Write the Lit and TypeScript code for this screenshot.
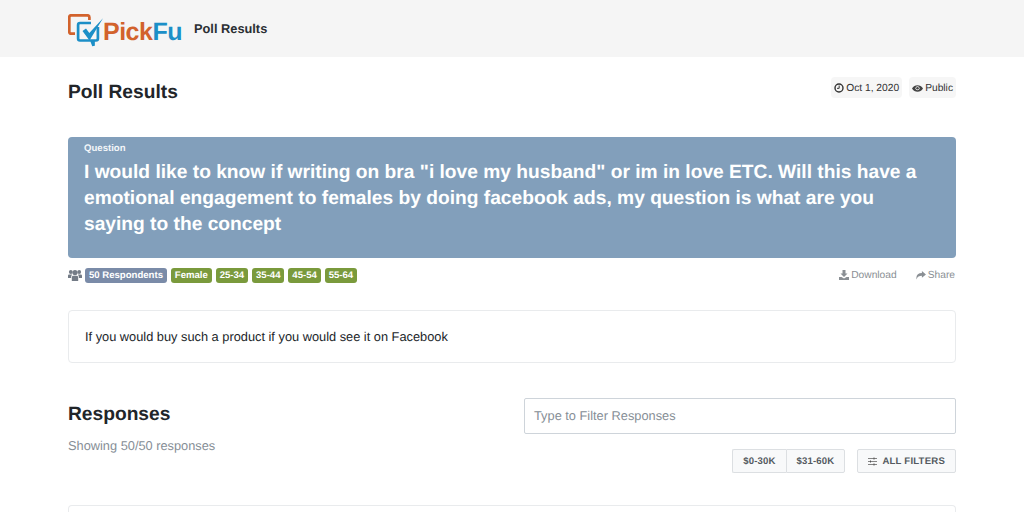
import { LitElement, html, css, svg } from "lit";
import { customElement } from "lit/decorators.js";

const clock = svg`<svg class="ic" width="10" height="10" viewBox="0 0 12 12"><circle cx="6" cy="6" r="4.800" fill="none" stroke="#333" stroke-width="1.700"/><path d="M6.200 3v3.400H3.600" fill="none" stroke="#333" stroke-width="1.200"/></svg>`;
const eye = svg`<svg class="ic" width="11" height="11" viewBox="0 0 12 12"><path d="M0 6c1.500-2.400 3.600-3.600 6-3.600s4.500 1.200 6 3.600c-1.500 2.400-3.600 3.600-6 3.600S1.500 8.400 0 6z" fill="#444"/><circle cx="6" cy="5.800" r="2.200" fill="#f6f6f6"/><circle cx="6" cy="5.800" r="1.400" fill="#444"/></svg>`;
const users = svg`<svg width="14" height="13" viewBox="0 0 14 13"><g fill="#737b86"><circle cx="2.800" cy="3" r="1.900"/><circle cx="11.200" cy="3" r="1.900"/><circle cx="7" cy="3.600" r="2.600"/><path d="M0 9V6.800c0-.8.600-1.300 1.400-1.300h2c.3 0 .5.100.7.300-.6.600-1 1.400-1 2.400V9H0zM14 9V6.800c0-.8-.6-1.300-1.400-1.300h-2c-.3 0-.5.100-.7.300.6.600 1 1.400 1 2.400V9H14z"/><path d="M3.800 8.400c0-1 .7-1.700 1.600-1.700h3.200c.9 0 1.600.7 1.600 1.700V12H3.800z"/></g></svg>`;
const download = svg`<svg class="ic" width="10" height="10" viewBox="0 0 10 10"><path d="M3.500 0h3v3.500h2L5 7 1.500 3.500h2zM0 7h2.500L5 8.500 7.500 7H10v3H0z" fill="#8a8f94"/></svg>`;
const share = svg`<svg class="ic" width="10" height="9" viewBox="0 0 11 10"><path d="M6.500 0L11 3.800 6.500 7.500V5.300C3.500 5.300 1.500 6 .6 9.500-.4 5 2 2.400 6.500 2.300z" fill="#8a8f94"/></svg>`;
const sliders = svg`<svg class="ic" width="9" height="9" viewBox="0 0 9 9"><path d="M0 1.500h9M0 4.500h9M0 7.500h9" stroke="#666" stroke-width=".8"/><path d="M5.500 .6h1v1.800h-1zM2 3.600h1v1.800H2zM5.500 6.600h1v1.800h-1z" fill="#555"/></svg>`;
const logoMark = svg`<svg class="mark" width="35" height="33" viewBox="0 0 35 33">
  <path d="M7 19.700H3.200C2 19.700 1.300 19 1.300 17.800V3.200C1.300 2 2 1.300 3.200 1.300H19.500c1.200 0 1.900.7 1.900 1.900V6" fill="none" stroke="#d2622c" stroke-width="2.700"/>
  <path d="M23 9H12c-1.200 0-1.900.7-1.900 1.900V24.600c0 1.200.7 1.900 1.900 1.900h11.500l2 5.300V26.500H28c1.200 0 1.900-.7 1.900-1.900V13" fill="none" stroke="#1c8fc7" stroke-width="2.700"/>
  <path d="M14.500 17l3.500-2.500 3.300 4.500L35 4.200 21.500 26.500z" fill="#1c8fc7"/>
</svg>`;

@customElement("app-root")
export class AppRoot extends LitElement {
  static styles = css`
    :host { display: block; font-family: "Liberation Sans", Arial, sans-serif; color: #212529; background: #fff; height: 512px; overflow: hidden; text-rendering: geometricPrecision; }
    .top { height: 57px; background: #f5f5f5; box-sizing: border-box; padding: 14px 68px 0; display: flex; align-items: flex-start; }
    .logo { display: flex; align-items: flex-start; width: 114px; height: 33px; flex: none; }
    .mark { flex: none; }
    .logotext { font-size: 25px; font-weight: 700; letter-spacing: -.5px; line-height: 30px; margin-top: 3px; color: #d2622c; }
    .logotext span { color: #1c8fc7; }
    .toptitle { font-size: 12.800px; font-weight: 700; margin-left: 12px; line-height: 16px; padding-top: 7px; color: #2b2f33; }
    .main { padding: 0 68px; }
    .head { display: flex; justify-content: space-between; align-items: flex-start; padding-top: 20px; }
    h1 { margin: 1px 0 0; font-size: 19.200px; font-weight: 700; line-height: 30px; }
    .metas { display: flex; gap: 7px; }
    .meta { background: #f6f6f6; border-radius: 4px; font-size: 10.240px; line-height: 21px; height: 21px; box-sizing: border-box; padding: 1px 3px 0; display: flex; align-items: center; gap: 2px; color: #333; }
    .q { margin-top: 29px; height: 121px; box-sizing: border-box; background: #829fbb; border-radius: 4px; padding: 6px 16px 0; color: #fff; }
    .qlabel { font-size: 9.600px; font-weight: 700; line-height: 11px; color: #f3f6f9; }
    .qtext { font-size: 19.200px; font-weight: 700; line-height: 26px; margin-top: 6px; }
    .tags { display: flex; justify-content: space-between; align-items: center; height: 33px; }
    .taglist { display: flex; align-items: center; gap: 4px; padding-top: 2px; }
    .tag { font-size: 9.600px; font-weight: 700; line-height: 15px; height: 15px; padding: 0 3.900px; border-radius: 3px; background: #7a9a3c; color: #fff; }
    .tag.blue { background: #7a8ba8; }
    .taglist svg { margin-right: -1px; }
    .acts { display: flex; gap: 19px; font-size: 10.240px; color: #8a8f94; padding: 1px 1px 0 0; }
    .act { display: flex; align-items: center; gap: 2px; }
    .card { margin-top: 19px; height: 53px; box-sizing: border-box; border: 1px solid #e9ebed; border-radius: 4px; padding: 0 16px 1px; display: flex; align-items: center; font-size: 12.800px; }
    .resp { display: grid; grid-template-columns: 456px 432px; margin-top: 35px; }
    h2 { margin: 0; font-size: 19.200px; font-weight: 700; line-height: 34px; }
    .showing { font-size: 12.800px; color: #868e96; margin-top: 5px; line-height: 18px; }
    .filter { height: 36px; box-sizing: border-box; border: 1px solid #ced4da; border-radius: 2px; padding: 0 9px 1px; font-size: 12.800px; color: #868e96; display: flex; align-items: center; }
    .btns { display: flex; justify-content: flex-end; gap: 12px; margin-top: 15px; }
    .grp { display: flex; }
    .btn { height: 24px; box-sizing: border-box; border: 1px solid #dcdfe2; background: #f8f9fa; font-size: 9.600px; font-weight: 700; color: #555b61; letter-spacing: .15px; display: flex; align-items: center; padding: 1px 10px 0; gap: 5px; border-radius: 2px; }
    .grp .btn:first-child { border-right: 0; border-radius: 2px 0 0 2px; }
    .grp .btn:last-child { border-radius: 0 2px 2px 0; }
    .btn.all { letter-spacing: .2px; }
    .bottom { margin-top: 32px; height: 20px; border: 1px solid #e9ebed; border-bottom: 0; border-radius: 4px 4px 0 0; }
  `;

  render() {
    return html`
      <div class="top">
        <div class="logo">${logoMark}<div class="logotext">Pick<span>Fu</span></div></div>
        <div class="toptitle">Poll Results</div>
      </div>
      <div class="main">
        <div class="head">
          <h1>Poll Results</h1>
          <div class="metas">
            <div class="meta">${clock}Oct 1, 2020</div>
            <div class="meta">${eye}Public</div>
          </div>
        </div>
        <div class="q">
          <div class="qlabel">Question</div>
          <div class="qtext">I would like to know if writing on bra "i love my husband" or im in love ETC. Will this have a emotional engagement to females by doing facebook ads, my question is what are you saying to the concept</div>
        </div>
        <div class="tags">
          <div class="taglist">
            ${users}
            <span class="tag blue">50 Respondents</span>
            <span class="tag">Female</span>
            <span class="tag">25-34</span>
            <span class="tag">35-44</span>
            <span class="tag">45-54</span>
            <span class="tag">55-64</span>
          </div>
          <div class="acts">
            <span class="act">${download}Download</span>
            <span class="act">${share}Share</span>
          </div>
        </div>
        <div class="card">If you would buy such a product if you would see it on Facebook</div>
        <div class="resp">
          <div>
            <h2>Responses</h2>
            <div class="showing">Showing 50/50 responses</div>
          </div>
          <div>
            <div class="filter">Type to Filter Responses</div>
            <div class="btns">
              <div class="grp"><div class="btn">$0-30K</div><div class="btn">$31-60K</div></div>
              <div class="btn all">${sliders}ALL FILTERS</div>
            </div>
          </div>
        </div>
        <div class="bottom"></div>
      </div>
    `;
  }
}
